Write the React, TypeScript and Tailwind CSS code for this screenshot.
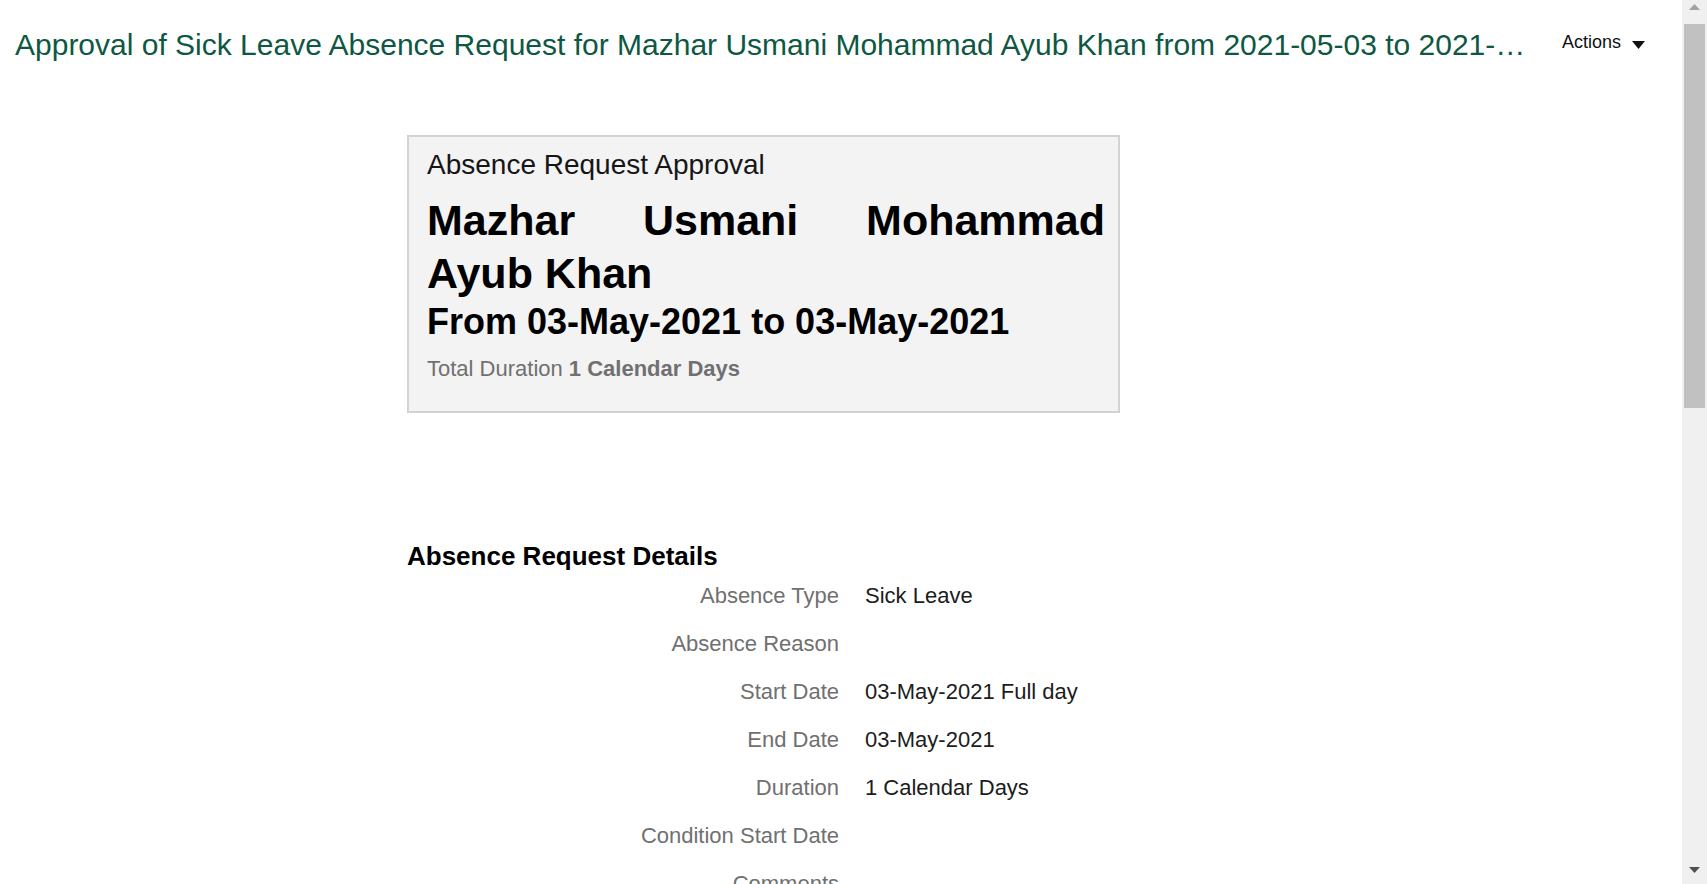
import React from "react";

const details: { label: string; value: string }[] = [
  { label: "Absence Type", value: "Sick Leave" },
  { label: "Absence Reason", value: "" },
  { label: "Start Date", value: "03-May-2021 Full day" },
  { label: "End Date", value: "03-May-2021" },
  { label: "Duration", value: "1 Calendar Days" },
  { label: "Condition Start Date", value: "" },
  { label: "Comments", value: "" },
];

const ScrollBar: React.FC = () => (
  <div className="w-[25px] shrink-0 h-full bg-[#f0f0f0] flex flex-col">
    <div className="h-[24px] flex justify-center pt-[4px]">
      <svg width="11" height="6" viewBox="0 0 11 6">
        <polygon points="5.5,0 11,6 0,6" fill="#a3a3a3" />
      </svg>
    </div>
    <div className="mx-[2px] h-[384px] bg-[#c1c1c1]" />
    <div className="flex-1" />
    <div className="h-[22px] flex justify-center pt-[5px]">
      <svg width="11" height="6" viewBox="0 0 11 6">
        <polygon points="0,0 11,0 5.5,6" fill="#505050" />
      </svg>
    </div>
  </div>
);

const App: React.FC = () => {
  return (
    <div className="h-[884px] w-full flex overflow-hidden bg-white font-['Liberation_Sans',Arial,sans-serif]">
      <div className="flex-1 min-w-0 overflow-hidden">
        {/* Page header */}
        <div className="flex items-start pl-[15px] pt-[27px]">
          <h1 className="w-[1516px] shrink-0 truncate text-[30px] leading-[36px] text-[#0e5843]">
            Approval of Sick Leave Absence Request for Mazhar Usmani Mohammad
            Ayub Khan from 2021-05-03 to 2021-05-03
          </h1>
          <button className="ml-[31px] mt-[3px] flex items-center text-[18px] leading-[24px] text-[#111]">
            Actions
            <svg className="ml-[11px] mt-[5px]" width="13" height="8" viewBox="0 0 13 8">
              <polygon points="0,0 13,0 6.5,8" fill="#111" />
            </svg>
          </button>
        </div>

        <div className="pl-[407px]">
          {/* Summary card */}
          <div className="mt-[72px] w-[713px] border-2 border-[#d3d3d3] bg-[#f3f3f3] pl-[18px] pr-[13px] pt-[11px] pb-[29px]">
            <div className="text-[28px] leading-[34px] text-[#161616]">
              Absence Request Approval
            </div>
            <div className="mt-[12px] text-[43px] leading-[53px] font-bold text-black text-justify">
              Mazhar Usmani Mohammad Ayub Khan
            </div>
            <div className="text-[36px] leading-[43px] font-bold text-black">
              From 03-May-2021 to 03-May-2021
            </div>
            <div className="mt-[13px] text-[22px] leading-[26px] text-[#707070]">
              Total Duration <span className="font-bold">1 Calendar Days</span>
            </div>
          </div>

          {/* Details */}
          <h2 className="mt-[128px] text-[26px] leading-[30px] font-bold text-black">
            Absence Request Details
          </h2>
          <div className="grid grid-cols-[432px_1fr] gap-x-[26px]">
            {details.map((row) => (
              <React.Fragment key={row.label}>
                <div className="h-[48px] flex items-center justify-end text-[22px] text-[#707070]">
                  {row.label}
                </div>
                <div className="h-[48px] flex items-center text-[22px] text-[#1c1c1c]">
                  {row.value}
                </div>
              </React.Fragment>
            ))}
          </div>
        </div>
      </div>
      <ScrollBar />
    </div>
  );
};

export default App;
